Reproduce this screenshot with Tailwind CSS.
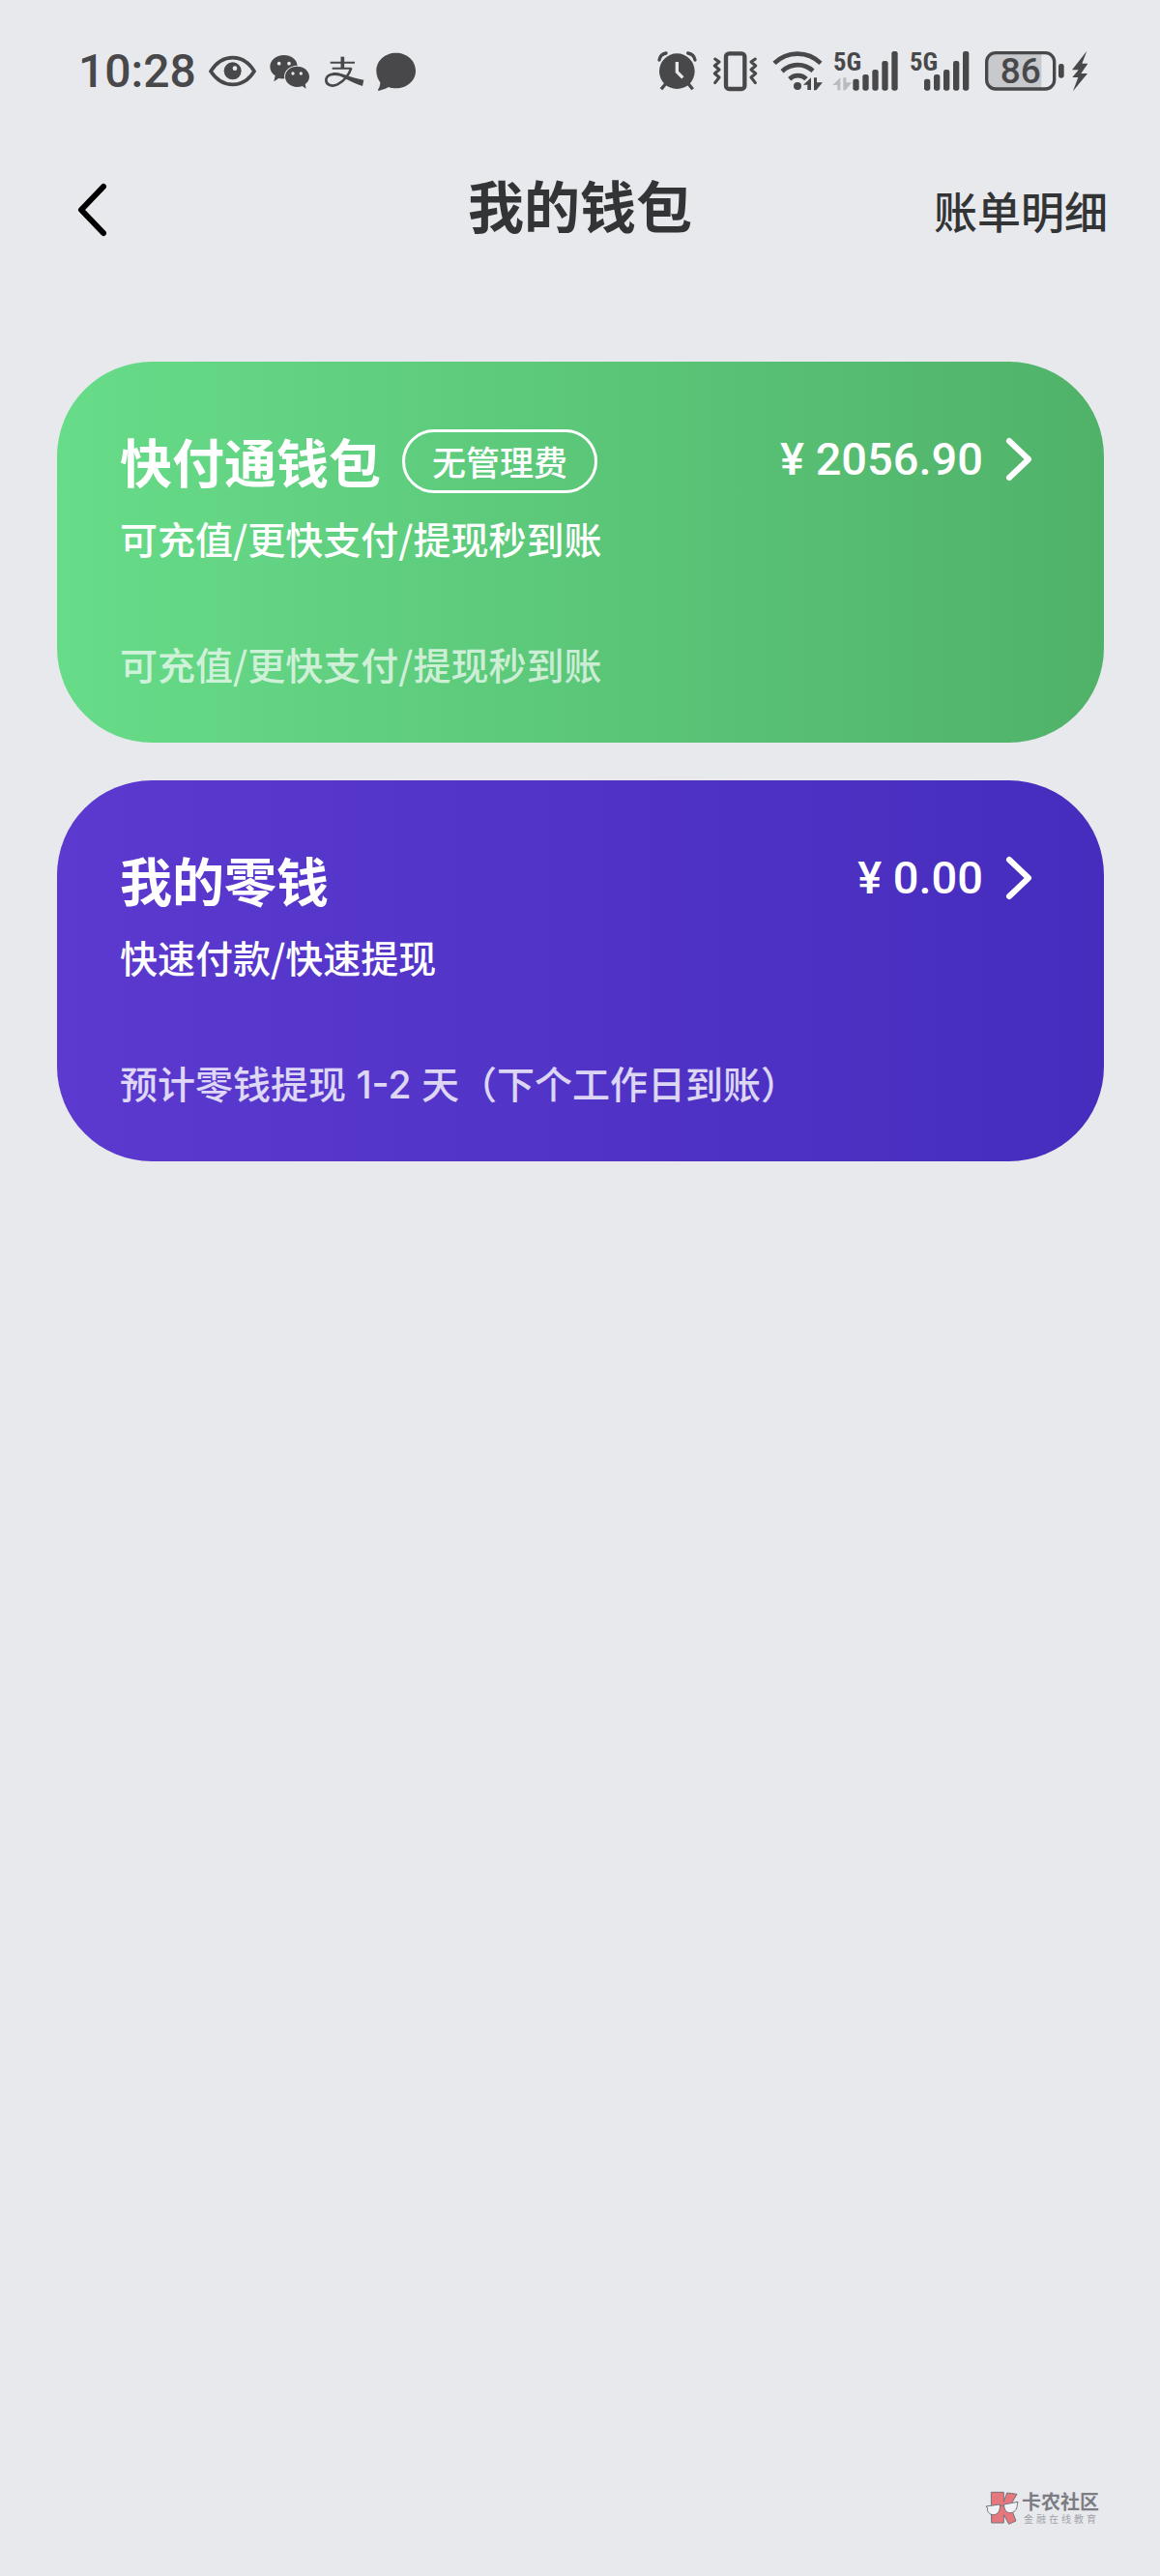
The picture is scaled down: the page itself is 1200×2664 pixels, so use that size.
<!DOCTYPE html>
<html lang="zh-CN">
<head>
<meta charset="utf-8">
<meta name="viewport" content="width=device-width, initial-scale=1">
<title>我的钱包</title>
<script src="https://cdn.jsdelivr.net/npm/@tailwindcss/browser@4"></script>
</head>
<body class="flex min-h-screen flex-col bg-[#e7e9ed] font-['Noto_Sans_CJK_SC',sans-serif] text-[#333436]">

<!-- Status bar -->
<div class="flex items-center justify-between pt-[53px] pr-[74px] pl-[81px] text-[#48484a]">
  <div class="flex h-[42px] items-center">
    <span class="w-[135px] font-[Roboto,sans-serif] text-[48px] leading-[42px] font-medium">10:28</span>
    <svg class="h-[42px] w-[49px]" viewBox="468 39 147 126" fill="none" aria-hidden="true">
      <path d="M474 101C492 73 516 59 542 59S592 73 609 101C592 128 567 142 542 142S492 128 474 101Z" stroke="currentColor" stroke-width="11"/>
      <circle cx="542" cy="100" r="27" fill="currentColor"/><circle cx="549" cy="92" r="7" fill="#e7e9ed"/>
    </svg>
    <svg class="ml-[14px] h-[42px] w-[42px]" viewBox="657 39 126 126" aria-hidden="true">
      <path fill="currentColor" d="M701 51C677 51 658 67 658 87C658 99 664 108 674 115L670 133L685 123C690 124 696 125 703 124C698 103 716 83 743 83C741 64 723 51 701 51Z"/>
      <path fill="currentColor" d="M742 86C721 86 705 100 705 118S721 150 742 150C748 150 753 149 758 147L770 155L767 142C775 136 780 128 780 118C780 100 763 86 742 86Z"/>
      <g fill="#e7e9ed"><circle cx="686" cy="77" r="5.500"/><circle cx="717" cy="77" r="5.500"/><circle cx="729" cy="108" r="5"/><circle cx="754" cy="108" r="5"/></g>
    </svg>
    <svg class="ml-[14px] h-[42px] w-[42px]" viewBox="825 39 126 126" fill="none" stroke="currentColor" aria-hidden="true">
      <path stroke-width="6" d="M845 74H921M851 92H911"/>
      <path stroke-width="11" d="M883 56V92"/>
      <path stroke-width="8" d="M910 91C903 112 887 132 867 142C850 150 832 144 832 129C832 112 853 106 875 112"/>
      <path fill="currentColor" stroke="none" d="M853 105C872 103 889 111 905 117C922 123 936 126 949 128L945 147C928 142 910 133 894 125C880 118 868 112 853 111Z"/>
    </svg>
    <svg class="ml-[12px] h-[42px] w-[42px]" viewBox="987 39 126 126" aria-hidden="true">
      <path fill="currentColor" d="M1049 44C1015 44 988 68 988 100C988 115 993 127 1000 136C1000 146 997 153 993 158C992 161 994 162 997 161C1010 158 1019 154 1026 150C1033 153 1041 154 1049 154C1083 154 1110 131 1110 100C1110 68 1083 44 1049 44Z"/>
    </svg>
  </div>

  <div class="flex h-[42px] items-center">
    <svg class="h-[42px] w-[42px]" viewBox="60 39 126 126" fill="none" stroke="currentColor" stroke-linecap="round" aria-hidden="true">
      <circle cx="121" cy="101" r="55" fill="currentColor" stroke="none"/>
      <path stroke-width="10" d="M66 66C68 55 76 47 87 45M155 45C167 47 175 55 177 66"/>
      <path stroke-width="10" stroke-linecap="butt" d="M88 137L72 157M154 137L170 157"/>
      <path stroke="#e7e9ed" stroke-width="10" stroke-linecap="butt" d="M121 72V103L139 121"/>
    </svg>
    <svg class="ml-[15px] h-[42px] w-[48px]" viewBox="231 39 144 126" fill="none" stroke="currentColor" stroke-linejoin="round" stroke-linecap="round" aria-hidden="true">
      <rect x="273" y="46" width="58" height="110" rx="10" stroke-width="13"/>
      <path stroke-width="9" d="M239 63L252 72L238 84L252 96L238 108L252 120L239 137M364 63L351 72L365 84L351 96L365 108L351 120L364 137"/>
    </svg>
    <svg class="ml-[14px] h-[42px] w-[53px]" viewBox="416 39 159 126" fill="none" stroke="currentColor" aria-hidden="true">
      <path stroke-width="14" d="M422 76C462 38 524 36 566 76M446 101C475 75 515 75 542 100M469 125C483 112 507 110 521 125"/>
      <circle cx="494" cy="147" r="12" fill="currentColor" stroke="none"/>
      <path fill="currentColor" stroke="none" d="M536 121V159H525V143H512ZM545 121H554V136H572L552 160H545Z"/>
    </svg>
    <svg class="ml-[9px] h-[42px] w-[69px] overflow-visible" viewBox="63 39 207 126" aria-label="5G">
      <text x="66" y="99" class="fill-current font-['Liberation_Sans_Narrow','Roboto_Condensed',Roboto,sans-serif] text-[80px] font-bold">5G</text>
      <path fill="#babbc0" d="M88 121V160H79V144H64ZM97 121H106V136H124L104 160H97Z"/>
      <g fill="currentColor"><rect x="127" y="125" width="19" height="36" rx="7"/><rect x="157" y="111" width="19" height="50" rx="7"/><rect x="187" y="96" width="19" height="65" rx="7"/><rect x="217" y="69" width="19" height="92" rx="7"/><rect x="247" y="39" width="19" height="122" rx="7"/></g>
    </svg>
    <svg class="ml-[10px] h-[42px] w-[64px] overflow-visible" viewBox="300 39 192 126" aria-label="5G">
      <text x="303" y="99" class="fill-current font-['Liberation_Sans_Narrow','Roboto_Condensed',Roboto,sans-serif] text-[80px] font-bold">5G</text>
      <g fill="currentColor"><rect x="348" y="125" width="19" height="36" rx="7"/><rect x="378" y="111" width="19" height="50" rx="7"/><rect x="408" y="96" width="19" height="65" rx="7"/><rect x="438" y="69" width="19" height="92" rx="7"/><rect x="468" y="39" width="19" height="122" rx="7"/></g>
    </svg>
    <svg class="ml-[14px] h-[42px] w-[108px] overflow-visible" viewBox="534 39 324 126" aria-label="86%">
      <path fill="#c8c9cc" d="M560 46H712V155H560C548 155 543 148 543 138V63C543 52 550 46 560 46Z"/>
      <rect x="542" y="44" width="210" height="112" rx="28" fill="none" stroke="currentColor" stroke-width="10"/>
      <rect x="765" y="78" width="17" height="44" rx="7" fill="currentColor"/>
      <path fill="currentColor" d="M853 38L807 97H827L808 120H826L810 163L855 108H835L856 77H838Z"/>
      <text x="647" y="139" text-anchor="middle" class="fill-current font-[Roboto,sans-serif] text-[111px] font-medium">86</text>
    </svg>
  </div>
</div>

<!-- Title bar -->
<header class="grid grid-cols-[1fr_auto_1fr] items-center px-[54px] pt-[82px]">
  <button type="button" aria-label="返回" class="mt-[4px] ml-[20px] h-[60px] w-[42px]">
    <svg class="h-[60px] w-[42px]" viewBox="0 0 42 60" fill="none" stroke="#000" stroke-width="6" stroke-linecap="round" stroke-linejoin="round" aria-hidden="true"><path d="M33 6L10 30L33 54"/></svg>
  </button>
  <h1 class="-mt-[8px] text-[58px] leading-[84px] font-bold">我的钱包</h1>
  <a href="#" class="justify-self-end pt-[6px] text-[45px] leading-[64px] font-medium">账单明细</a>
</header>

<!-- Wallet cards -->
<main class="flex flex-col gap-[39px] pt-[121px] pr-[58px] pl-[59px]">
  <a href="#" class="block h-[394px] rounded-[98px] bg-linear-to-r from-[#67dc89] to-[#50b269] pt-[70px] pr-[71px] pl-[65px] text-white">
    <div class="flex items-center">
      <h2 class="text-[54px] leading-[66px] font-bold">快付通钱包</h2>
      <span class="ml-[22px] rounded-full border-3 border-white px-[28px] text-[35px] leading-[60px] font-medium">无管理费</span>
      <div class="ml-auto flex items-center pb-[4px]">
        <span class="font-[Roboto,sans-serif] text-[47px] leading-[60px] font-medium">¥ 2056.90</span>
        <svg class="ml-[22px] h-[48px] w-[32px]" viewBox="0 0 32 48" fill="none" stroke="currentColor" stroke-width="6" stroke-linecap="round" stroke-linejoin="round" aria-hidden="true"><path d="M5 5L25 24L5 43"/></svg>
      </div>
    </div>
    <p class="mt-[18px] text-[39px] leading-[56px] font-medium">可充值/更快支付/提现秒到账</p>
    <p class="mt-[74px] text-[39px] leading-[56px] font-medium text-white/70">可充值/更快支付/提现秒到账</p>
  </a>

  <a href="#" class="block h-[394px] rounded-[98px] bg-linear-to-r from-[#5c39cf] to-[#462dbe] pt-[70px] pr-[71px] pl-[65px] text-white">
    <div class="flex items-center">
      <h2 class="text-[54px] leading-[66px] font-bold">我的零钱</h2>
      <div class="ml-auto flex items-center pb-[4px]">
        <span class="font-[Roboto,sans-serif] text-[47px] leading-[60px] font-medium">¥ 0.00</span>
        <svg class="ml-[22px] h-[48px] w-[32px]" viewBox="0 0 32 48" fill="none" stroke="currentColor" stroke-width="6" stroke-linecap="round" stroke-linejoin="round" aria-hidden="true"><path d="M5 5L25 24L5 43"/></svg>
      </div>
    </div>
    <p class="mt-[18px] text-[39px] leading-[56px] font-medium">快速付款/快速提现</p>
    <p class="mt-[74px] text-[39px] leading-[56px] font-medium text-white/80">预计零钱提现<span class="font-[Inter,sans-serif]"> 1-2 </span>天（下个工作日到账）</p>
  </a>
</main>

<!-- Community mark -->
<footer class="mt-auto flex items-center justify-end pr-[63px] pb-[52px] text-[#7c7c83]">
  <svg class="h-[36px] w-[36px]" viewBox="58 50 108 108" stroke="#74747c" stroke-width="3" stroke-linejoin="round" aria-hidden="true">
    <path fill="#e5777d" d="M77 54H116V84L126 56L157 60L136 96L154 143L132 153L116 124V149H78Z"/>
    <path fill="#f1f2f5" d="M61 98L104 92C106 111 98 124 84 124C70 124 64 113 66 104ZM117 92L160 84L158 94C157 109 148 118 136 118C123 118 117 107 117 92Z"/>
    <path fill="none" d="M104 97Q110 92 117 97"/>
  </svg>
  <div class="ml-[2px]">
    <p class="text-[20px] leading-[22px] font-bold">卡农社区</p>
    <p class="ml-[2px] text-[10px] leading-[14px] tracking-[3px] text-[#a3a4aa]">金融在线教育</p>
  </div>
</footer>
</body>
</html>
